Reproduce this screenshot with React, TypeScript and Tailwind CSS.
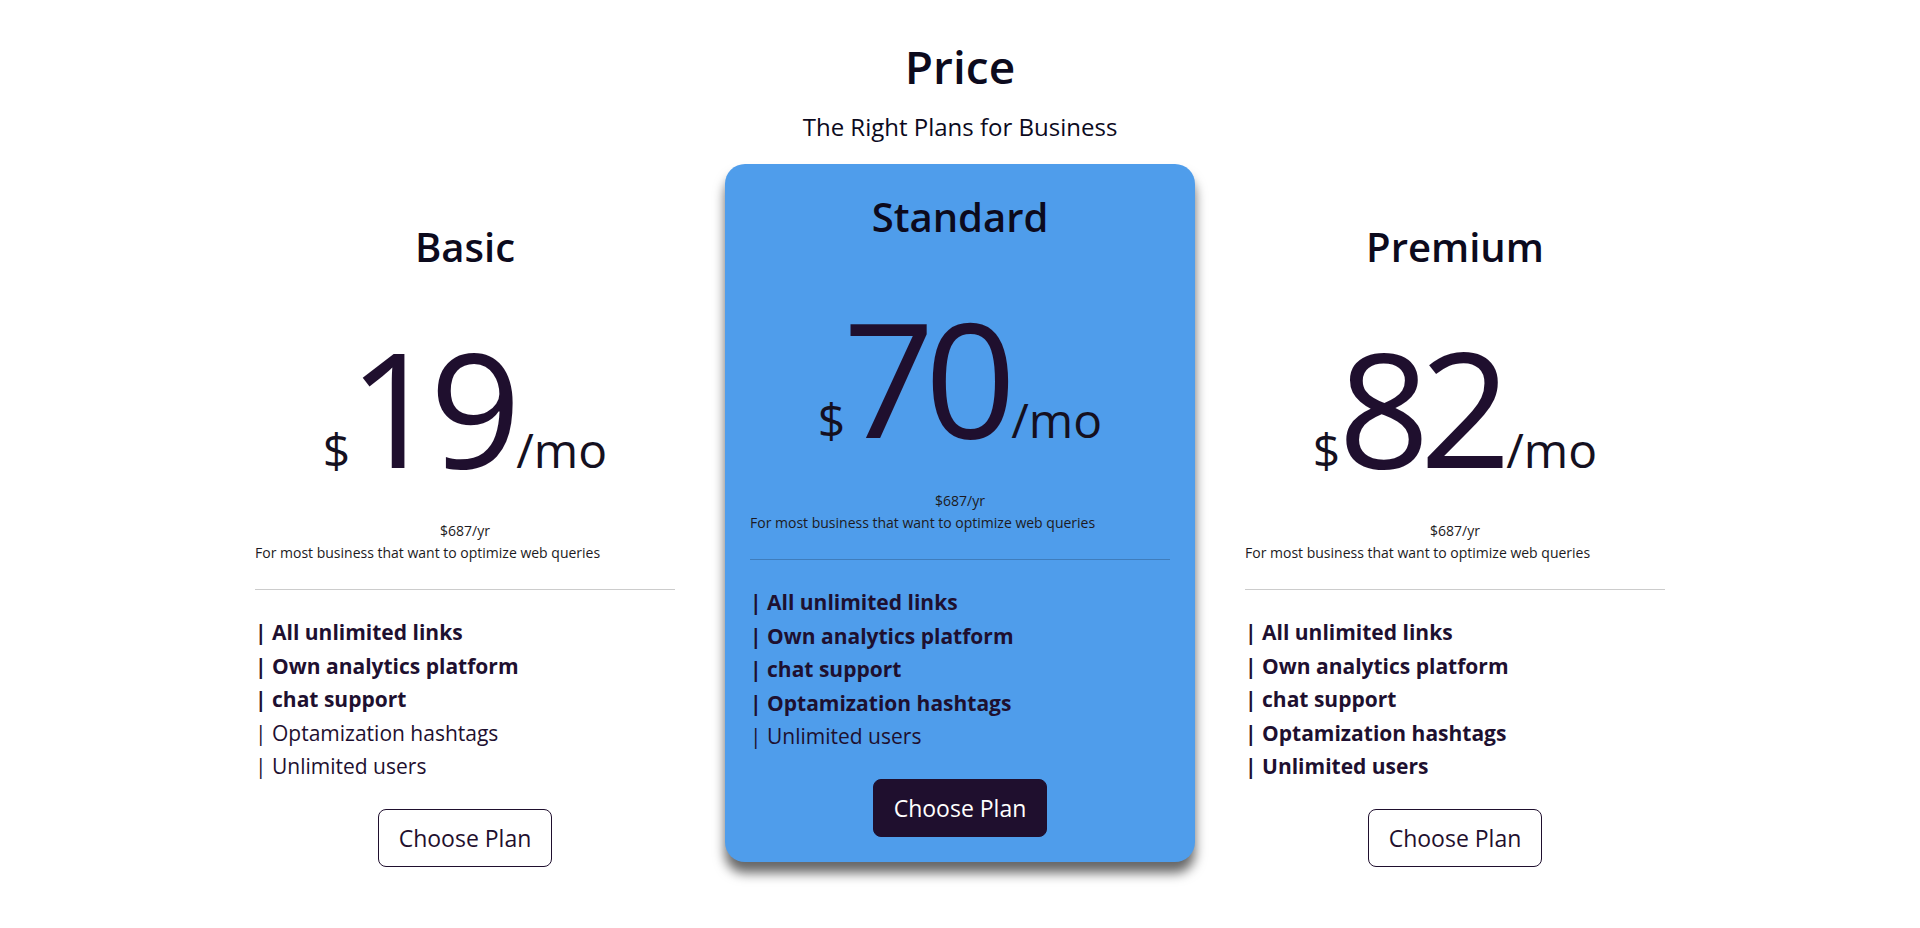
const plans = [
  {
    name: "Basic",
    price: "19",
    featured: false,
    features: [
      { text: "All unlimited links", bold: true },
      { text: "Own analytics platform", bold: true },
      { text: "chat support", bold: true },
      { text: "Optamization hashtags", bold: false },
      { text: "Unlimited users", bold: false },
    ],
  },
  {
    name: "Standard",
    price: "70",
    featured: true,
    features: [
      { text: "All unlimited links", bold: true },
      { text: "Own analytics platform", bold: true },
      { text: "chat support", bold: true },
      { text: "Optamization hashtags", bold: true },
      { text: "Unlimited users", bold: false },
    ],
  },
  {
    name: "Premium",
    price: "82",
    featured: false,
    features: [
      { text: "All unlimited links", bold: true },
      { text: "Own analytics platform", bold: true },
      { text: "chat support", bold: true },
      { text: "Optamization hashtags", bold: true },
      { text: "Unlimited users", bold: true },
    ],
  },
];

function PlanCard({ plan }: { plan: (typeof plans)[number] }) {
  return (
    <div
      className={
        plan.featured
          ? "w-[470px] px-[25px] pt-[28px] pb-[25px] rounded-[20px] bg-[#4f9deb] shadow-[0_11px_12px_rgba(0,0,0,0.6)]"
          : "w-[470px] px-[25px] pt-[28px] pb-[25px] mt-[30px]"
      }
    >
      <h2 className="text-center text-[40px] leading-[1.25] font-semibold text-[#0c0a1d]">{plan.name}</h2>

      <div className="mt-[54px] flex items-baseline justify-center">
        <span className="text-[48px] leading-none text-[#15101f]">$</span>
        <span className="-ml-[2px] text-[160px] leading-none tracking-[-10px] text-[#1f0f2e]">{plan.price}</span>
        <span className="ml-[5px] text-[48px] leading-none text-[#15101f]">/mo</span>
      </div>

      <p className="mt-[34px] text-center text-[14px] leading-[22px] text-[#1c1a22]">$687/yr</p>
      <p className="text-[14px] leading-[22px] text-[#1c1a22]">For most business that want to optimize web queries</p>

      <hr className="mt-[25px] border-0 border-t border-black/20" />

      <ul className="mt-[26px]">
        {plan.features.map((f) => (
          <li
            key={f.text}
            className={
              f.bold
                ? "text-[21px] leading-[33.6px] font-bold text-[#1e1030]"
                : "text-[21px] leading-[33.6px] font-normal text-[#1e1030]"
            }
          >
            | {f.text}
          </li>
        ))}
      </ul>

      <div className="mt-[25px] flex justify-center">
        <button
          className={
            plan.featured
              ? "px-[20px] py-[10px] rounded-[8px] border border-[#1f0f2e] bg-[#1f0f2e] text-[23px] leading-[36px] text-white"
              : "px-[20px] py-[10px] rounded-[8px] border border-[#1f0f2e] bg-white text-[23px] leading-[36px] text-[#1f0f2e]"
          }
        >
          Choose Plan
        </button>
      </div>
    </div>
  );
}

export default function App() {
  return (
    <main className="min-h-[928px] bg-white pt-[37px] font-['Open_Sans',sans-serif]">
      <h1 className="text-center text-[46px] leading-[58px] font-semibold text-[#0c0a1d]">Price</h1>
      <p className="mt-[14px] text-center text-[24px] leading-[36px] text-[#0c0a1d]">The Right Plans for Business</p>

      <section className="mt-[19px] flex items-start justify-center gap-[25px]">
        {plans.map((p) => (
          <PlanCard key={p.name} plan={p} />
        ))}
      </section>
    </main>
  );
}
